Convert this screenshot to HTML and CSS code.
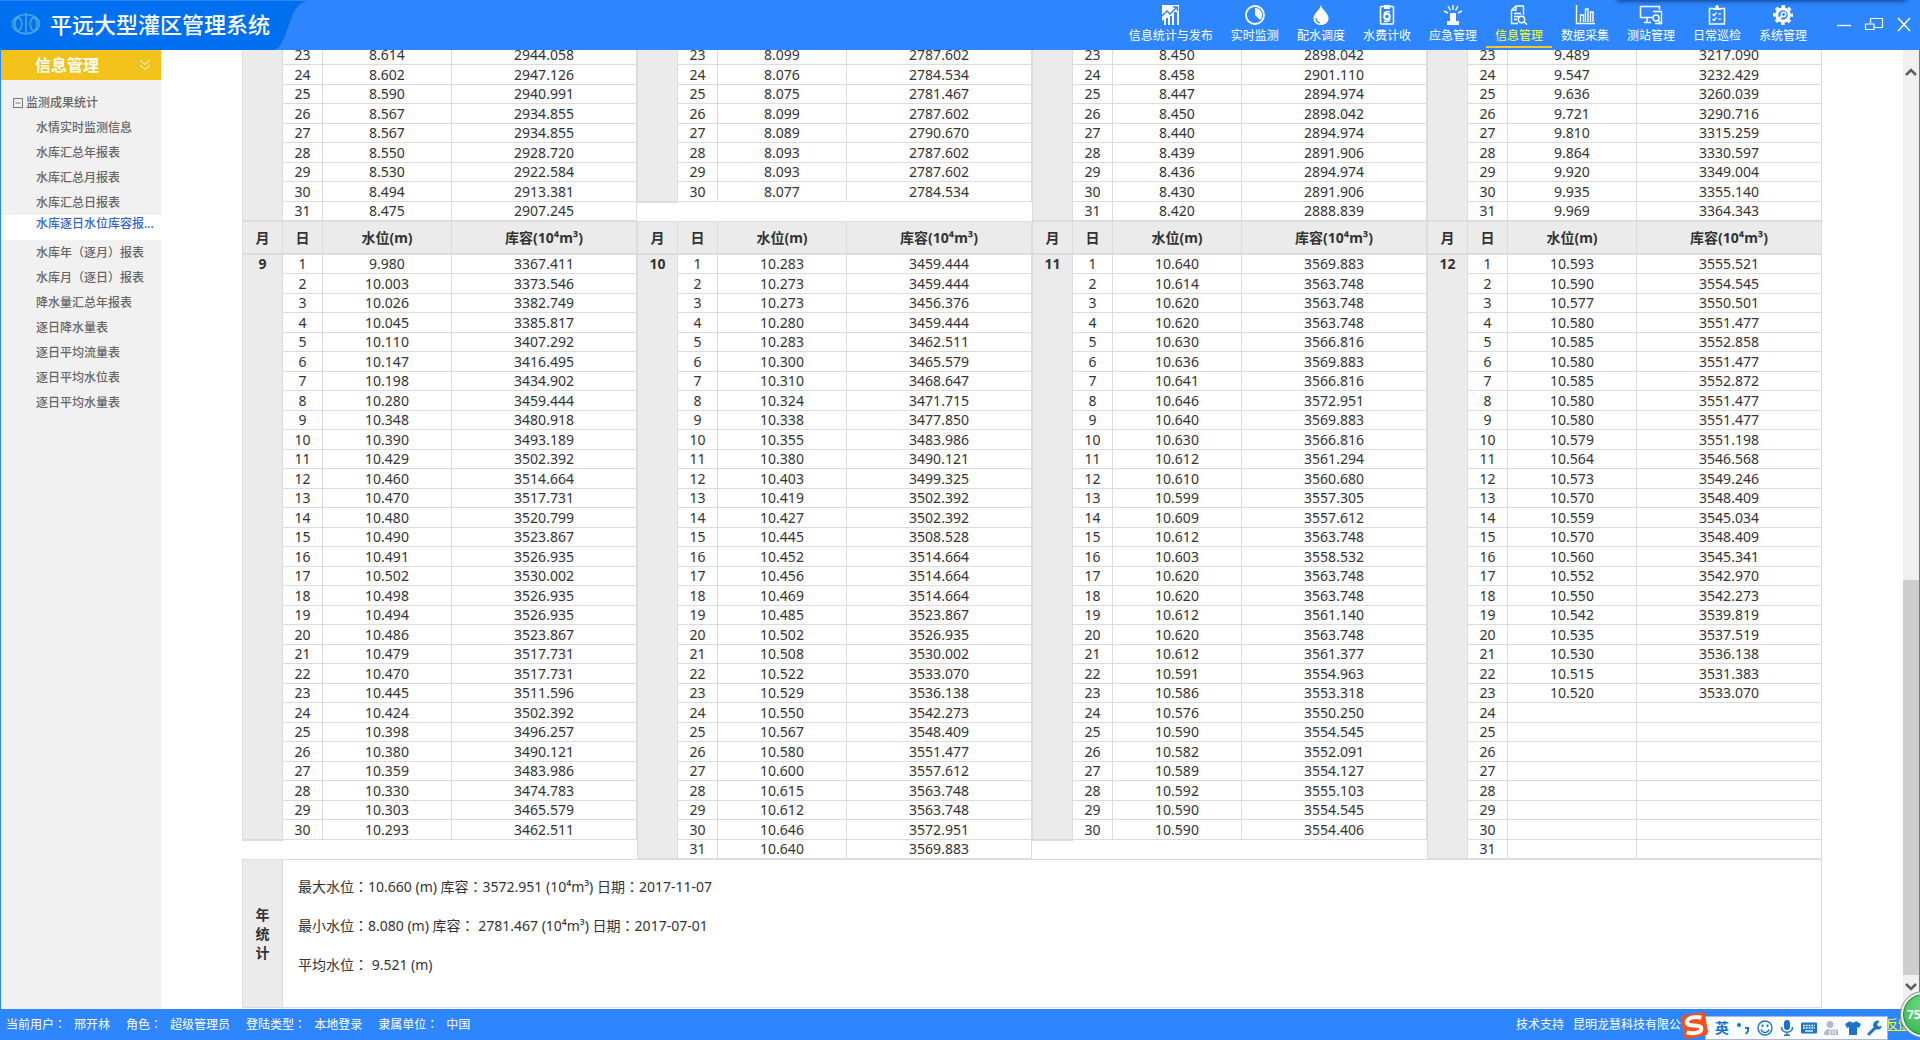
FILE: index.html
```html
<!DOCTYPE html>
<html lang="zh-CN">
<head>
<meta charset="utf-8">
<title>平远大型灌区管理系统</title>
<link rel="stylesheet" href="styles.css">
</head>
<body>
<div class="app">
  <header class="topbar">
    <div class="brand">
      <svg class="brand-shape" viewBox="0 0 306 50" preserveAspectRatio="none" aria-hidden="true"><path d="M0 1H306C300 2 296 6 292 15L284 37C281 45 278 49 273 50H0Z" fill="#0070f0"/><path d="M306 1C300 2 296 6 292 15L284 37C281 45 278 49 273 50" fill="none" stroke="#1c62c4" stroke-width="1.5" opacity=".6"/></svg>
      <svg class="brand-logo" viewBox="0 0 30 24" aria-hidden="true"><g fill="none" stroke="#45a3e0" stroke-width="1.700"><ellipse cx="15" cy="12" rx="13.500" ry="9.500"/><path d="M7 5C12 8 12 16 7 19M23 5C18 8 18 16 23 19M7 5C3 8 3 16 7 19M23 5C27 8 27 16 23 19M15 1V23"/></g></svg>
      <h1>平远大型灌区管理系统</h1>
    </div>
    <nav class="modules">
      <a href="#"><svg viewBox="0 0 20 20"><path fill="#fff" d="M1 0H18V20H16V7H13V20H11V11H9V20H7V13H5V20H3V14L1 16Z"/><path d="M1 11L6 6L9 9L16 2M12 2H16.500V6" fill="none" stroke="#2e86ff" stroke-width="1.500"/></svg>信息统计与发布</a>
      <a href="#"><svg viewBox="0 0 20 20"><circle cx="10" cy="10" r="9" fill="none" stroke="#fff" stroke-width="1.800"/><path d="M10 3A7 7 0 0 1 15 15L10 10Z" fill="#fff"/></svg>实时监测</a>
      <a href="#"><svg viewBox="0 0 20 20"><path d="M10 0C11 5 17.500 8 17.500 13.500C17.500 17.500 14 20 10 20S2.500 17.500 2.500 13.500C2.500 8 9 5 10 0Z" fill="#fff"/><path d="M5 13C5 16 7 17.500 9 18" fill="none" stroke="#2e86ff" stroke-width="1.200"/></svg>配水调度</a>
      <a href="#"><svg viewBox="0 0 20 20"><rect x="3.500" y="1.500" width="13" height="17.500" rx="1" fill="none" stroke="#fff" stroke-width="1.500"/><path d="M7 0H13V4H7Z" fill="#fff"/><circle cx="10" cy="11.500" r="2.800" fill="none" stroke="#fff" stroke-width="2"/><path d="M7 9C8 6.500 11 6 13 7M13 14C12 16.500 9 17 7 16" fill="none" stroke="#fff" stroke-width="1.500"/></svg>水费计收</a>
      <a href="#"><svg viewBox="0 0 20 20"><path d="M7 8H13V16H16V20H4V16H7Z" fill="#fff"/><path d="M10 0V5M5 1L7.500 5.500M15 1L12.500 5.500M1 6L5 8M19 6L15 8" stroke="#fff" stroke-width="1.400"/></svg>应急管理</a>
      <a href="#" class="current"><svg viewBox="0 0 20 20"><path d="M9 18.500H2.500V5L7 1H14.500V10M7 1V5H2.500M5 8.500H12M5 11.500H10M5 14.500H8" fill="none" stroke="#fff" stroke-width="1.400"/><circle cx="12.500" cy="14.500" r="3.200" fill="none" stroke="#fff" stroke-width="1.400"/><path d="M15 17L18 19.500" stroke="#fff" stroke-width="1.600"/></svg>信息管理</a>
      <a href="#"><svg viewBox="0 0 20 20"><path d="M1.500 0V18.500H20M5.500 17V10H8.500V17M10.500 17V4H13V17M15.500 17V7H18V17" fill="none" stroke="#fff" stroke-width="1.400"/></svg>数据采集</a>
      <a href="#"><svg class="wide" viewBox="0 0 24 20"><path d="M13 12.500H1.500V1.500H20.500V5M8 12.500V17M5 17.500H12" fill="none" stroke="#fff" stroke-width="1.500"/><path d="M14 6.500H22.500V18.500H16" fill="none" stroke="#fff" stroke-width="1.400"/><circle cx="17" cy="13" r="3" fill="none" stroke="#fff" stroke-width="1.500"/><path d="M19 15L22 19" stroke="#fff" stroke-width="1.500"/></svg>测站管理</a>
      <a href="#"><svg viewBox="0 0 20 20"><path d="M6 3.500H2.500V19H17.500V3.500H14" fill="none" stroke="#fff" stroke-width="1.500"/><path d="M6 5V3H8C8 -1 12 -1 12 3H14V5Z" fill="#fff"/><path d="M5.500 9L7 10.500L9.500 7.500M5.500 14L7 15.500L9.500 12.500M11 9H14M11 14H14" fill="none" stroke="#fff" stroke-width="1.200"/></svg>日常巡检</a>
      <a href="#"><svg viewBox="0 0 20 20"><circle cx="10" cy="10" r="6.200" fill="none" stroke="#fff" stroke-width="3"/><circle cx="10" cy="10" r="8.500" fill="none" stroke="#fff" stroke-width="3" stroke-dasharray="3.400 3.276" stroke-dashoffset="1.700"/><circle cx="10.500" cy="9.500" r="2.200" fill="none" stroke="#fff" stroke-width="1.500"/><path d="M9 11L5 15" stroke="#fff" stroke-width="2"/></svg>系统管理</a>
    </nav>
    <div class="window-controls">
      <button type="button" aria-label="最小化"><svg viewBox="0 0 20 16"><path d="M3 9.500H17" stroke="#fff" stroke-width="1.300"/></svg></button>
      <button type="button" aria-label="还原"><svg viewBox="0 0 20 16"><path d="M6.500 7V2.500H18.500V11.500H10M1.500 8H10V13.500H1.500Z" fill="none" stroke="#fff" stroke-width="1.200"/></svg></button>
      <button type="button" aria-label="关闭"><svg viewBox="0 0 20 16"><path d="M4 2L16 15M16 2L4 15" stroke="#fff" stroke-width="1.500"/></svg></button>
    </div>
  </header>

  <div class="workspace">
    <aside class="sidebar">
      <h2>信息管理<svg viewBox="0 0 12 12" aria-hidden="true"><path d="M1 1L6 5.500L11 1M1 6L6 10.500L11 6" fill="none" stroke="#fff"/></svg></h2>
      <div class="tree-head"><svg viewBox="0 0 10 10" aria-hidden="true"><path d="M.5 .5H9.500V9.500H.5ZM2.500 5H7.500" fill="none" stroke="#777"/></svg>监测成果统计</div>
      <ul class="tree">
        <li><a href="#">水情实时监测信息</a></li>
        <li><a href="#">水库汇总年报表</a></li>
        <li><a href="#">水库汇总月报表</a></li>
        <li><a href="#">水库汇总日报表</a></li>
        <li class="selected"><a href="#">水库逐日水位库容报...</a></li>
        <li><a href="#">水库年（逐月）报表</a></li>
        <li><a href="#">水库月（逐日）报表</a></li>
        <li><a href="#">降水量汇总年报表</a></li>
        <li><a href="#">逐日降水量表</a></li>
        <li><a href="#">逐日平均流量表</a></li>
        <li><a href="#">逐日平均水位表</a></li>
        <li><a href="#">逐日平均水量表</a></li>
      </ul>
    </aside>

    <main class="report">
      <section class="months" id="may-august"></section>
      <section class="months" id="september-december"></section>
      <section class="summary">
        <h3>年<br>统<br>计</h3>
        <div class="summary-text">
          <p>最大水位<span lang="zh-Hant">：</span>10.660 (m) 库容<span lang="zh-Hant">：</span>3572.951 (10⁴m³) 日期<span lang="zh-Hant">：</span>2017-11-07</p>
          <p>最小水位<span lang="zh-Hant">：</span>8.080 (m) 库容<span lang="zh-Hant">：</span> 2781.467 (10⁴m³) 日期<span lang="zh-Hant">：</span>2017-07-01</p>
          <p>平均水位<span lang="zh-Hant">：</span> 9.521 (m)</p>
        </div>
      </section>
    </main>

    <div class="scrollbar">
      <button type="button" aria-label="向上滚动"><svg viewBox="0 0 12 12"><path d="M1 9L6 4L11 9" fill="none" stroke="#606060" stroke-width="2.600"/></svg></button>
      <div class="track"><div class="thumb"></div></div>
      <button type="button" aria-label="向下滚动"><svg viewBox="0 0 12 12"><path d="M1 3L6 8L11 3" fill="none" stroke="#606060" stroke-width="2.600"/></svg></button>
    </div>
  </div>

  <footer class="statusbar">
    <dl>
      <div><dt>当前用户<span lang="zh-Hant">：</span></dt><dd>邢开林</dd></div>
      <div><dt>角色<span lang="zh-Hant">：</span></dt><dd>超级管理员</dd></div>
      <div><dt>登陆类型<span lang="zh-Hant">：</span></dt><dd>本地登录</dd></div>
      <div><dt>隶属单位<span lang="zh-Hant">：</span></dt><dd>中国</dd></div>
    </dl>
    <div class="support"><span>技术支持</span><span class="company">昆明龙慧科技有限公司</span><a href="#">反馈</a></div>
  </footer>
</div>

<div class="top-shadow"></div>
<div class="ime">
  <svg class="ime-logo" viewBox="0 0 30 30" aria-hidden="true"><path d="M3 5L22 1Q25 .5 25.500 3L29 21Q29 24 27 25L8 29Q5 29.500 4.500 27L1 9Q1 6 3 5Z" fill="#f4511e"/><path d="M22 7C16 5 7 7 7 12C7 17 22 13 22 18C22 23 13 24 7 22" fill="none" stroke="#fff" stroke-width="4.200"/></svg>
  <div class="ime-bar">
    <b>英</b>
    <svg viewBox="0 0 16 16"><circle cx="4" cy="5" r="2" fill="#1b74cc"/><path d="M10 8H13V11L11 14" fill="none" stroke="#1b74cc" stroke-width="2"/></svg>
    <svg viewBox="0 0 16 16"><circle cx="8" cy="8" r="7" fill="none" stroke="#1b74cc" stroke-width="1.400"/><path d="M5.500 4.500V7M10.500 4.500V7" stroke="#1b74cc" stroke-width="1.800"/><path d="M4 9.500C5.500 13.500 10.500 13.500 12 9.500" fill="none" stroke="#1b74cc" stroke-width="1.400"/></svg>
    <svg viewBox="0 0 16 16"><rect x="5" width="6" height="10" rx="3" fill="#1b74cc"/><path d="M2.500 7C2.500 14 13.500 14 13.500 7M8 12V15M5 15.300H11" fill="none" stroke="#1b74cc" stroke-width="1.500"/></svg>
    <svg viewBox="0 0 16 16"><rect y="2.500" width="16" height="11" rx="1" fill="#1b74cc"/><path d="M2 5.500H14M2 8H14" stroke="#fff" stroke-width="1.400" stroke-dasharray="1.800 1"/><path d="M4 11H12" stroke="#fff" stroke-width="1.300"/></svg>
    <svg viewBox="0 0 16 16"><circle cx="7" cy="4.500" r="3.500" fill="#b4bccb"/><path d="M1 15C1 9 5 9 7 9S12 9 12 15Z" fill="#b4bccb"/><path d="M7 9H15.500V15.500H7Z" fill="#b4bccb" stroke="#fff"/><path d="M10 10.500V14M12.500 10.500V14" stroke="#fff"/></svg>
    <svg viewBox="0 0 16 16"><path d="M5 1C6 3 10 3 11 1L16 4L14 8L12 7V15H4V7L2 8L0 4Z" fill="#1b74cc"/></svg>
    <svg viewBox="0 0 16 16"><path d="M2 14L9 7" stroke="#1b74cc" stroke-width="3" stroke-linecap="round"/><path d="M12.500 1A4.500 4.500 0 1 0 15 6L11.500 6.500L10 4.500Z" fill="#1b74cc"/></svg>
  </div>
</div>
<div class="speed-ball">75</div>
<script src="report.js"></script>
</body>
</html>
```
FILE: styles.css
```css
* { box-sizing: border-box; }
body {
  margin: 0;
  font-family: "Noto Sans", "Noto Sans CJK SC", sans-serif;
  font-size: 14px;
  color: #333;
  background: #fff;
  overflow: hidden;
}
h1, h2, h3, p, ul, dl, dd { margin: 0; padding: 0; }
a { color: inherit; text-decoration: none; }
button { padding: 0; border: 0; background: none; }
svg { display: block; flex: none; }

.app { display: flex; flex-direction: column; height: 100vh; }

/* top bar */
.topbar { display: flex; height: 50px; flex: none; background: #2e86ff; color: #fff; }
.brand { position: relative; display: flex; align-items: center; width: 306px; padding: 0 0 3px 11px; gap: 9px; margin-right: auto; }
.brand-shape { position: absolute; inset: 0; width: 100%; height: 50px; }
.brand-logo { position: relative; width: 30px; height: 24px; }
.brand h1 { position: relative; font-size: 22px; font-weight: 500; line-height: 32px; white-space: nowrap; }
.modules { display: flex; }
.modules a {
  display: flex; flex-direction: column; align-items: center;
  height: 48px; padding: 5px 9px 0; font-size: 12px; line-height: 21px; white-space: nowrap;
}
.modules svg { width: 20px; height: 20px; }
.modules svg.wide { width: 24px; }
.modules .current { color: #ff0; border-bottom: 2px solid #f8c81c; }
.window-controls { display: flex; align-items: center; gap: 10px; padding: 0 6px 2px 18px; }
.window-controls svg { width: 20px; height: 16px; }

/* work area */
.workspace { display: flex; flex: 1; min-height: 0; border: solid #2e86ff; border-width: 0 1px; }
.sidebar { width: 160px; flex: none; background: #f1f1f1; color: #666; font-size: 12px; font-weight: 500; }
.sidebar h2 {
  display: flex; align-items: center; justify-content: space-between;
  height: 30px; padding: 0 10px 0 34px; background: #f2c11a; color: #fff; font-size: 16px; line-height: 30px;
}
.sidebar h2 svg { width: 12px; height: 12px; }
.tree-head { display: flex; align-items: center; gap: 3px; padding: 10px 0 0 12px; line-height: 25px; }
.tree-head svg { width: 10px; height: 10px; }
.tree { list-style: none; }
.tree a { display: block; height: 25px; padding-left: 35px; line-height: 25px; white-space: nowrap; }
.tree .selected a { background: #fff; color: #36c; line-height: 17px; }

/* yearly report */
.report { flex: 1; min-width: 0; overflow: hidden; padding: 0 81px; }
#may-august { margin-top: -4px; }
.months { display: grid; grid-template-columns: repeat(4, 1fr); align-items: start; }
.months table { width: 100%; table-layout: fixed; border-collapse: separate; border-spacing: 0; text-align: center; }
.col-month { width: 41px; }
.col-day { width: 40px; }
.col-level { width: 129px; }
.months th, .months td { height: 19px; padding: 0; border: solid #dcdcdc; border-width: 0 1px 1px 0; line-height: 18px; }
.months tbody tr:nth-child(even) td,
.months thead + tbody tr:first-child td { height: 20px; }
.months th { background: #ebebeb; font-weight: 700; vertical-align: top; }
.months th:first-child { border-left-width: 1px; }
.months thead th { height: 33px; border-top-width: 1px; vertical-align: middle; }
.months thead + tbody tr:first-child > * { border-top-width: 1px; }
.months tbody th { box-shadow: 0 1px 0 #dcdcdc; }

.summary { display: flex; height: 149px; border: 1px solid #dcdcdc; }
.summary h3 {
  display: flex; align-items: center; justify-content: center; width: 40px; flex: none;
  border-right: 1px solid #dcdcdc; background: #ebebeb; font-size: 14px; line-height: 19px;
}
.summary-text { padding: 7px 15px; line-height: 39px; }

/* scrollbar */
.scrollbar { display: flex; flex-direction: column; width: 16px; flex: none; padding-top: 14px; background: #f0f0f0; }
.scrollbar button { display: flex; height: 16px; align-items: center; justify-content: center; margin-bottom: 2px; }
.scrollbar svg { width: 12px; height: 12px; }
.track { display: flex; flex-direction: column; justify-content: flex-end; flex: 1; }
.thumb { height: 44%; margin-bottom: 4px; background: #cdcdcd; }
.scrollbar button:last-child { margin-bottom: 14px; }

/* status bar */
.statusbar {
  display: flex; justify-content: space-between; align-items: center; flex: none; height: 31px;
  padding: 0 10px 0 6px; background: #2e86ff; color: #fff; font-size: 12px; line-height: 18px; white-space: nowrap;
}
.statusbar dl { display: flex; gap: 16px; }
.statusbar dl div { display: flex; gap: 8px; }
.support { display: flex; gap: 9px; }
.company { width: 304px; }
.support a { color: #ff0; text-decoration: underline; }

/* desktop items that float above the window */
.top-shadow { position: absolute; top: -4px; right: 15px; width: 287px; height: 4px; box-shadow: 0 0 5px 1px #0a3a80; }
.ime { position: absolute; right: 32px; bottom: 0; display: flex; align-items: flex-end; }
.ime-logo { width: 29px; height: 29px; margin-right: -4px; z-index: 1; }
.ime-bar {
  display: flex; align-items: center; gap: 6px; height: 24px; padding: 0 4px 0 9px;
  border: 1px solid #a9b8d0; background: #fafcff; color: #1b74cc; font-size: 14px; line-height: 20px;
}
.ime-bar svg { width: 16px; height: 16px; }
.speed-ball {
  position: absolute; right: -26px; bottom: 3px; width: 45px; height: 45px; padding-left: 4px;
  border: 2px solid #e8efe8; border-radius: 50%; background: radial-gradient(circle at 50% 30%, #6fdc80, #2fae4a);
  box-shadow: 0 0 0 1px #888, inset 0 0 0 1px #198a3a; color: #fff; font-size: 12px; font-weight: 700; line-height: 41px;
}
```
FILE: report.js
```js
// Daily [level, capacity] readings by month; an empty entry is a day without data.
const lateSummer = [
  { month: "", days: "8.614 2944.058,8.602 2947.126,8.590 2940.991,8.567 2934.855,8.567 2934.855,8.550 2928.720,8.530 2922.584,8.494 2913.381,8.475 2907.245" },
  { month: "", days: "8.099 2787.602,8.076 2784.534,8.075 2781.467,8.099 2787.602,8.089 2790.670,8.093 2787.602,8.093 2787.602,8.077 2784.534" },
  { month: "", days: "8.450 2898.042,8.458 2901.110,8.447 2894.974,8.450 2898.042,8.440 2894.974,8.439 2891.906,8.436 2894.974,8.430 2891.906,8.420 2888.839" },
  { month: "", days: "9.489 3217.090,9.547 3232.429,9.636 3260.039,9.721 3290.716,9.810 3315.259,9.864 3330.597,9.920 3349.004,9.935 3355.140,9.969 3364.343" }
];
const autumn = [
  { month: "9", days: "9.980 3367.411,10.003 3373.546,10.026 3382.749,10.045 3385.817,10.110 3407.292,10.147 3416.495,10.198 3434.902,10.280 3459.444,10.348 3480.918,10.390 3493.189,10.429 3502.392,10.460 3514.664,10.470 3517.731,10.480 3520.799,10.490 3523.867,10.491 3526.935,10.502 3530.002,10.498 3526.935,10.494 3526.935,10.486 3523.867,10.479 3517.731,10.470 3517.731,10.445 3511.596,10.424 3502.392,10.398 3496.257,10.380 3490.121,10.359 3483.986,10.330 3474.783,10.303 3465.579,10.293 3462.511" },
  { month: "10", days: "10.283 3459.444,10.273 3459.444,10.273 3456.376,10.280 3459.444,10.283 3462.511,10.300 3465.579,10.310 3468.647,10.324 3471.715,10.338 3477.850,10.355 3483.986,10.380 3490.121,10.403 3499.325,10.419 3502.392,10.427 3502.392,10.445 3508.528,10.452 3514.664,10.456 3514.664,10.469 3514.664,10.485 3523.867,10.502 3526.935,10.508 3530.002,10.522 3533.070,10.529 3536.138,10.550 3542.273,10.567 3548.409,10.580 3551.477,10.600 3557.612,10.615 3563.748,10.612 3563.748,10.646 3572.951,10.640 3569.883" },
  { month: "11", days: "10.640 3569.883,10.614 3563.748,10.620 3563.748,10.620 3563.748,10.630 3566.816,10.636 3569.883,10.641 3566.816,10.646 3572.951,10.640 3569.883,10.630 3566.816,10.612 3561.294,10.610 3560.680,10.599 3557.305,10.609 3557.612,10.612 3563.748,10.603 3558.532,10.620 3563.748,10.620 3563.748,10.612 3561.140,10.620 3563.748,10.612 3561.377,10.591 3554.963,10.586 3553.318,10.576 3550.250,10.590 3554.545,10.582 3552.091,10.589 3554.127,10.592 3555.103,10.590 3554.545,10.590 3554.406" },
  { month: "12", days: "10.593 3555.521,10.590 3554.545,10.577 3550.501,10.580 3551.477,10.585 3552.858,10.580 3551.477,10.585 3552.872,10.580 3551.477,10.580 3551.477,10.579 3551.198,10.564 3546.568,10.573 3549.246,10.570 3548.409,10.559 3545.034,10.570 3548.409,10.560 3545.341,10.552 3542.970,10.550 3542.273,10.542 3539.819,10.535 3537.519,10.530 3536.138,10.515 3531.383,10.520 3533.070,,,,,,,," }
];

function monthTable({ month, days }, firstDay, withHead) {
  const readings = days.split(",");
  const head = withHead
    ? "<thead><tr><th>月</th><th>日</th><th>水位(m)</th><th>库容(10⁴m³)</th></tr></thead>"
    : "";
  const rows = readings.map((reading, i) => {
    const [level = "", capacity = ""] = reading.split(" ");
    const monthCell = i === 0 ? `<th rowspan="${readings.length}">${month}</th>` : "";
    return `<tr>${monthCell}<td>${firstDay + i}</td><td>${level}</td><td>${capacity}</td></tr>`;
  });
  return `<table><colgroup><col class="col-month"><col class="col-day"><col class="col-level"><col></colgroup>${head}<tbody>${rows.join("")}</tbody></table>`;
}

document.getElementById("may-august").innerHTML = lateSummer.map(m => monthTable(m, 23, false)).join("");
document.getElementById("september-december").innerHTML = autumn.map(m => monthTable(m, 1, true)).join("");
```
